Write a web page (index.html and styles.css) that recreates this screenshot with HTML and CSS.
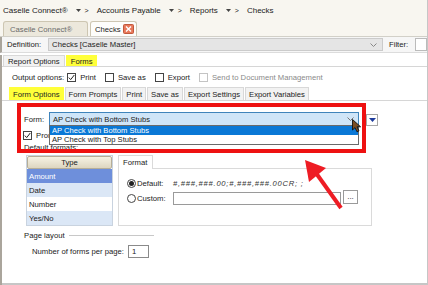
FILE: index.html
```html
<!DOCTYPE html>
<html lang="en">
<head>
  <meta charset="UTF-8" />
  <title>Checks</title>
  <link rel="stylesheet" href="styles.css">
</head>
<body>
  <div class="window">
    <!-- breadcrumb -->
    <div class="crumbs">
      <span>Caselle Connect®</span>
      <svg class="caret" width="5" height="3" viewBox="0 0 5 3"><path d="M0 0h5L2.5 3z" fill="#444"/></svg>
      <span class="sep">&gt;</span>
      <span>Accounts Payable</span>
      <svg class="caret" width="5" height="3" viewBox="0 0 5 3"><path d="M0 0h5L2.5 3z" fill="#444"/></svg>
      <span class="sep">&gt;</span>
      <span>Reports</span>
      <svg class="caret" width="5" height="3" viewBox="0 0 5 3"><path d="M0 0h5L2.5 3z" fill="#444"/></svg>
      <span class="sep">&gt;</span>
      <span>Checks</span>
    </div>

    <div class="doc-tabs">
      <div class="doc-tab">Caselle Connect®</div>
      <div class="doc-tab active">
        <span>Checks</span>
        <svg class="close" width="11" height="10" viewBox="0 0 11 10">
          <rect x="0.5" y="0.5" width="10" height="9" rx="1" fill="#e8785a" stroke="#c0593c"/>
          <path d="M3 2.5l5 5M8 2.5l-5 5" stroke="#fff" stroke-width="1.4"/>
        </svg>
      </div>
    </div>

    <div class="def-row">
      <span class="def-label">Definition:</span>
      <div class="def-combo">
        <span>Checks [Caselle Master]</span>
        <svg width="7" height="4" viewBox="0 0 7 4"><path d="M0.5 0.5L3.5 3.5L6.5 0.5" fill="none" stroke="#888"/></svg>
      </div>
      <span class="filter-label">Filter:</span>
      <div class="filter-box"></div>
    </div>

    <div class="main">
      <div class="tabs top-tabs">
        <div class="tab">Report Options</div>
        <div class="tab hl">Forms</div>
      </div>

      <div class="output-row">
        <span class="out-label">Output options:</span>
        <span class="cb checked"><svg width="7" height="7" viewBox="0 0 7 7"><path d="M0.8 3.6L2.7 5.6L6.3 1" fill="none" stroke="#222" stroke-width="1"/></svg></span>
        <span class="cb-text">Print</span>
        <span class="cb"></span>
        <span class="cb-text">Save as</span>
        <span class="cb"></span>
        <span class="cb-text">Export</span>
        <span class="cb disabled"></span>
        <span class="cb-text muted">Send to Document Management</span>
      </div>

      <div class="tabs sub-tabs">
        <div class="tab hl">Form Options</div>
        <div class="tab">Form Prompts</div>
        <div class="tab">Print</div>
        <div class="tab">Save as</div>
        <div class="tab">Export Settings</div>
        <div class="tab">Export Variables</div>
      </div>

      <div class="form-area">
        <div class="form-row">
          <span class="form-label">Form:</span>
          <div class="form-combo">
            <span>AP Check with Bottom Stubs</span>
            <svg width="7" height="4" viewBox="0 0 7 4"><path d="M0.5 0.5L3.5 3.5L6.5 0.5" fill="none" stroke="#777"/></svg>
          </div>
          <div class="mini-btn"><svg width="7" height="4" viewBox="0 0 7 4"><path d="M0 0h7L3.5 4z" fill="#1d3b9c"/></svg></div>
        </div>

        <div class="prompt-row">
          <span class="cb checked"><svg width="7" height="7" viewBox="0 0 7 7"><path d="M0.8 3.6L2.7 5.6L6.3 1" fill="none" stroke="#222" stroke-width="1"/></svg></span>
          <span class="cb-text">Prompt for form at print time</span>
        </div>

        <div class="defaults-label">Default formats:</div>

        <div class="formats">
          <div class="type-grid">
            <div class="grid-head">Type</div>
            <div class="grid-row selected">Amount</div>
            <div class="grid-row alt">Date</div>
            <div class="grid-row">Number</div>
            <div class="grid-row alt">Yes/No</div>
          </div>

          <div class="format-box">
            <div class="format-tab">Format</div>
            <div class="format-panel">
              <div class="fmt-line">
                <span class="radio on"></span>
                <span class="fmt-label">Default:</span>
                <span class="fmt-value">#,###,###.00;#,###,###.00CR; ;</span>
              </div>
              <div class="fmt-line">
                <span class="radio"></span>
                <span class="fmt-label">Custom:</span>
                <div class="fmt-input"></div>
                <div class="dots-btn">...</div>
              </div>
            </div>
          </div>
        </div>

        <div class="page-layout">
          <span>Page layout</span>
          <span class="rule"></span>
        </div>

        <div class="per-page">
          <span>Number of forms per page:</span>
          <div class="num-input">1</div>
        </div>
      </div>
    </div>

    <!-- open dropdown and annotations -->
    <div class="dropdown">
      <div class="dd-item selected">AP Check with Bottom Stubs</div>
      <div class="dd-item">AP Check with Top Stubs</div>
    </div>
    <div class="callout"></div>
    <svg class="cursor" width="10" height="14" viewBox="0 0 10 14">
      <path d="M0.5 0.5L0.5 11L3 8.6L5 12.8L7 11.9L5 7.8L8.6 7.8Z" fill="#7a4c22" stroke="#111" stroke-width="0.9"/>
    </svg>
    <svg class="arrow" width="60" height="60" viewBox="0 0 60 60">
      <path d="M14 15L39 50" stroke="#ee1c24" stroke-width="4"/>
      <path d="M3 2L7 24L24 10Z" fill="#ee1c24"/>
    </svg>
  </div>
</body>
</html>
```

FILE: styles.css
```css
* {
  box-sizing: border-box;
  margin: 0;
  padding: 0;
}

body {
  width: 428px;
  height: 285px;
  overflow: hidden;
  background: #fff;
  font-family: 'Liberation Sans', Arial, sans-serif;
  font-size: 7.7px;
  color: #222;
}

.window {
  position: relative;
  width: 428px;
  height: 285px;
  border-right: 1px solid #c6c6c6;
  border-bottom: 2px solid #c6c6c6;
}

/* breadcrumb + document tabs */
.crumbs {
  height: 20px;
  display: flex;
  align-items: center;
  padding-left: 3px;
  background: #f8f6f0;
  font-size: 8px;
  color: #222;
}

.crumbs .caret {
  margin: 0 4px 0 8px;
}

.crumbs .sep {
  margin-right: 8px;
  font-size: 7px;
}

.doc-tabs {
  height: 17px;
  display: flex;
  align-items: flex-end;
  gap: 2px;
  padding-left: 3px;
  background: #f8f6f0;
  border-bottom: 1px solid #d2d0c8;
}

.doc-tab {
  height: 15px;
  width: 85px;
  display: flex;
  align-items: center;
  padding-left: 6px;
  border: 1px solid #cdc6b2;
  border-bottom: none;
  border-radius: 3px 3px 0 0;
  background: #ece8dc;
  color: #6a6a6a;
}

.doc-tab.active {
  width: 47px;
  padding-left: 4px;
  background: #fdfdfb;
  color: #222;
}

.doc-tab .close {
  margin-left: auto;
  margin-right: 2px;
  flex-shrink: 0;
}

.def-row {
  height: 16px;
  display: flex;
  align-items: center;
  background: #f6f6f6;
  border-left: 2px solid #aaa59c;
  border-bottom: 1px solid #dcdcdc;
}

.def-label {
  margin-left: 5px;
  width: 42px;
}

.def-combo {
  width: 342px;
  height: 13px;
  display: flex;
  align-items: center;
  justify-content: space-between;
  padding: 0 5px 0 3px;
  background: #e5e5e5;
  border: 1px solid #cbcbcb;
}

.filter-label {
  margin-left: 6px;
}

.filter-box {
  margin-left: 7px;
  width: 12px;
  height: 13px;
  background: #fff;
  border: 1px solid #bbb;
}

/* main panel */
.main {
  height: 231px;
  border-left: 2px solid #aaa59c;
}

.tabs {
  display: flex;
  border-bottom: 1px solid #d6d6d6;
}

.tab {
  display: flex;
  align-items: center;
  padding: 0 4px;
  background: #f2f2f2;
  border: 1px solid #d8d8d8;
  border-bottom: none;
  margin-right: 1px;
  white-space: nowrap;
}

.tab.hl {
  background: #ffff3a;
  border-color: #ffff3a;
}

.top-tabs {
  margin-top: 2px;
  height: 12px;
  padding-left: 1px;
}

.output-row {
  margin-top: 4px;
  height: 12px;
  display: flex;
  align-items: center;
  padding-left: 10px;
}

.out-label {
  margin-right: 3px;
}

.cb {
  width: 9px;
  height: 9px;
  display: flex;
  align-items: center;
  justify-content: center;
  background: #fff;
  border: 1px solid #444;
}

.cb.disabled {
  border-color: #c4c4c4;
}

.cb-text {
  margin: 0 9px 0 4px;
}

.muted {
  color: #8a8a8a;
}

.sub-tabs {
  margin-top: 4px;
  height: 14px;
  padding-left: 7px;
}

.sub-tabs .tab {
  padding: 0 3px;
}

/* form options */
.form-row {
  margin-top: 11px;
  height: 14px;
  display: flex;
  align-items: center;
  padding-left: 22px;
}

.form-label {
  width: 25px;
}

.form-combo {
  width: 310px;
  height: 14px;
  display: flex;
  align-items: center;
  justify-content: space-between;
  padding: 0 4px 0 3px;
  background: #cfe5f8;
  border: 1px solid #3f84bb;
  font-size: 7.6px;
}

.mini-btn {
  margin-left: 7px;
  margin-top: 2px;
  width: 12px;
  height: 12px;
  display: flex;
  align-items: center;
  justify-content: center;
  background: #fff;
  border: 1px solid #a8a8a8;
}

.prompt-row {
  margin-top: 5px;
  height: 9px;
  display: flex;
  align-items: center;
  padding-left: 21px;
}

.defaults-label {
  margin-top: 3px;
  padding-left: 22px;
  height: 9px;
  line-height: 9px;
}

.formats {
  margin-top: 3px;
  display: flex;
  align-items: flex-start;
  padding-left: 24px;
}

.type-grid {
  width: 87px;
  border: 1px solid #c9d3df;
}

.grid-head {
  height: 13px;
  display: flex;
  align-items: center;
  justify-content: center;
  background: linear-gradient(#f6f2e4, #ddd6c0);
  border: 1px solid #b6ae98;
  border-radius: 2px;
}

.grid-row {
  height: 14px;
  display: flex;
  align-items: center;
  padding-left: 2px;
  background: #fff;
}

.grid-row.alt {
  background: #dbe7f6;
}

.grid-row.selected {
  background: #6e8fdb;
  color: #fff;
}

.format-box {
  margin-left: 5px;
  width: 254px;
}

.format-tab {
  width: 35px;
  height: 14px;
  display: flex;
  align-items: center;
  padding-left: 4px;
  background: #fff;
  border: 1px solid #dadada;
  border-bottom: none;
  margin-bottom: -1px;
  position: relative;
}

.format-panel {
  height: 58px;
  border: 1px solid #dadada;
  padding: 7px 0 0 8px;
}

.fmt-line {
  height: 15px;
  display: flex;
  align-items: center;
}

.radio {
  width: 9px;
  height: 9px;
  border-radius: 50%;
  border: 1px solid #444;
  background: #fff;
  display: flex;
  align-items: center;
  justify-content: center;
}

.radio.on::after {
  content: "";
  width: 5px;
  height: 5px;
  border-radius: 50%;
  background: #222;
}

.fmt-label {
  width: 36px;
  margin-left: 1px;
}

.fmt-value {
  font-style: italic;
  font-size: 7.6px;
  letter-spacing: 0.75px;
  color: #333;
}

.fmt-input {
  width: 168px;
  height: 13px;
  background: #fff;
  border: 1px solid #9a9a9a;
}

.dots-btn {
  margin-left: 2px;
  width: 15px;
  height: 14px;
  margin-top: -3px;
  display: flex;
  align-items: center;
  justify-content: center;
  background: #fff;
  border: 1px solid #9a9a9a;
  font-size: 8px;
  line-height: 1;
}

.page-layout {
  margin-top: 5px;
  height: 9px;
  display: flex;
  align-items: center;
  padding-left: 22px;
}

.page-layout .rule {
  margin-left: 4px;
  width: 85px;
  height: 1px;
  background: #c8c8c8;
}

.per-page {
  margin-top: 5px;
  height: 13px;
  display: flex;
  align-items: center;
  padding-left: 30px;
}

.num-input {
  margin-left: 4px;
  width: 21px;
  height: 13px;
  display: flex;
  align-items: center;
  padding-left: 3px;
  background: #fff;
  border: 1px solid #8a8a8a;
}

/* open list and screenshot annotations */
.dropdown {
  position: absolute;
  left: 49px;
  top: 125px;
  width: 310px;
  height: 20px;
  background: #fff;
  border: 1px solid #6a6a6a;
  font-size: 7.6px;
}

.dd-item {
  height: 9px;
  line-height: 9px;
  padding-left: 2px;
}

.dd-item.selected {
  background: #0a78d6;
  color: #fff;
}

.callout {
  position: absolute;
  left: 17px;
  top: 103px;
  width: 349px;
  height: 50px;
  border: 4px solid #ee1111;
}

.cursor {
  position: absolute;
  left: 352px;
  top: 119px;
}

.arrow {
  position: absolute;
  left: 302px;
  top: 158px;
}
```
